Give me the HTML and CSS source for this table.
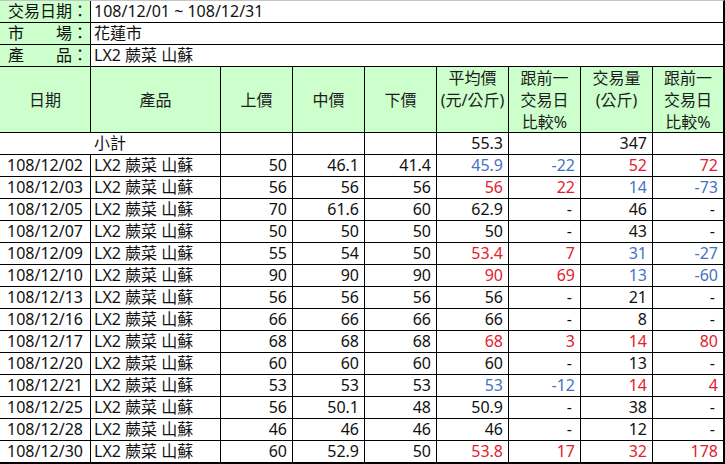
FILE: index.html
```html
<!DOCTYPE html>
<html lang="zh-Hant">
<head>
<meta charset="utf-8">
<title>交易行情</title>
<link rel="stylesheet" href="styles.css">
</head>
<body>
<div class="sheet">
  <div class="c lab">交易日期：</div>
  <div class="c val span8">108/12/01 ~ 108/12/31</div>
  <div class="c lab">市　　場：</div>
  <div class="c val span8">花蓮市</div>
  <div class="c lab">產　　品：</div>
  <div class="c val span8">LX2 蕨菜 山蘇</div>

  <div class="c hd">日期</div>
  <div class="c hd">產品</div>
  <div class="c hd">上價</div>
  <div class="c hd">中價</div>
  <div class="c hd">下價</div>
  <div class="c hd top">平均價<br>(元/公斤)</div>
  <div class="c hd top">跟前一<br>交易日<br>比較%</div>
  <div class="c hd top">交易量<br>(公斤)</div>
  <div class="c hd top">跟前一<br>交易日<br>比較%</div>

  <div class="c sub span2">小計</div>
  <div class="c"></div>
  <div class="c"></div>
  <div class="c"></div>
  <div class="c num">55.3</div>
  <div class="c"></div>
  <div class="c num">347</div>
  <div class="c"></div>

  <div class="c date">108/12/02</div><div class="c prod">LX2 蕨菜 山蘇</div><div class="c num">50</div><div class="c num">46.1</div><div class="c num">41.4</div><div class="c num blue">45.9</div><div class="c num blue">-22</div><div class="c num red">52</div><div class="c num red">72</div>
  <div class="c date">108/12/03</div><div class="c prod">LX2 蕨菜 山蘇</div><div class="c num">56</div><div class="c num">56</div><div class="c num">56</div><div class="c num red">56</div><div class="c num red">22</div><div class="c num blue">14</div><div class="c num blue">-73</div>
  <div class="c date">108/12/05</div><div class="c prod">LX2 蕨菜 山蘇</div><div class="c num">70</div><div class="c num">61.6</div><div class="c num">60</div><div class="c num">62.9</div><div class="c num dash">-</div><div class="c num">46</div><div class="c num dash">-</div>
  <div class="c date">108/12/07</div><div class="c prod">LX2 蕨菜 山蘇</div><div class="c num">50</div><div class="c num">50</div><div class="c num">50</div><div class="c num">50</div><div class="c num dash">-</div><div class="c num">43</div><div class="c num dash">-</div>
  <div class="c date">108/12/09</div><div class="c prod">LX2 蕨菜 山蘇</div><div class="c num">55</div><div class="c num">54</div><div class="c num">50</div><div class="c num red">53.4</div><div class="c num red">7</div><div class="c num blue">31</div><div class="c num blue">-27</div>
  <div class="c date">108/12/10</div><div class="c prod">LX2 蕨菜 山蘇</div><div class="c num">90</div><div class="c num">90</div><div class="c num">90</div><div class="c num red">90</div><div class="c num red">69</div><div class="c num blue">13</div><div class="c num blue">-60</div>
  <div class="c date">108/12/13</div><div class="c prod">LX2 蕨菜 山蘇</div><div class="c num">56</div><div class="c num">56</div><div class="c num">56</div><div class="c num">56</div><div class="c num dash">-</div><div class="c num">21</div><div class="c num dash">-</div>
  <div class="c date">108/12/16</div><div class="c prod">LX2 蕨菜 山蘇</div><div class="c num">66</div><div class="c num">66</div><div class="c num">66</div><div class="c num">66</div><div class="c num dash">-</div><div class="c num">8</div><div class="c num dash">-</div>
  <div class="c date">108/12/17</div><div class="c prod">LX2 蕨菜 山蘇</div><div class="c num">68</div><div class="c num">68</div><div class="c num">68</div><div class="c num red">68</div><div class="c num red">3</div><div class="c num red">14</div><div class="c num red">80</div>
  <div class="c date">108/12/20</div><div class="c prod">LX2 蕨菜 山蘇</div><div class="c num">60</div><div class="c num">60</div><div class="c num">60</div><div class="c num">60</div><div class="c num dash">-</div><div class="c num">13</div><div class="c num dash">-</div>
  <div class="c date">108/12/21</div><div class="c prod">LX2 蕨菜 山蘇</div><div class="c num">53</div><div class="c num">53</div><div class="c num">53</div><div class="c num blue">53</div><div class="c num blue">-12</div><div class="c num red">14</div><div class="c num red">4</div>
  <div class="c date">108/12/25</div><div class="c prod">LX2 蕨菜 山蘇</div><div class="c num">56</div><div class="c num">50.1</div><div class="c num">48</div><div class="c num">50.9</div><div class="c num dash">-</div><div class="c num">38</div><div class="c num dash">-</div>
  <div class="c date">108/12/28</div><div class="c prod">LX2 蕨菜 山蘇</div><div class="c num">46</div><div class="c num">46</div><div class="c num">46</div><div class="c num">46</div><div class="c num dash">-</div><div class="c num">12</div><div class="c num dash">-</div>
  <div class="c date">108/12/30</div><div class="c prod">LX2 蕨菜 山蘇</div><div class="c num">60</div><div class="c num">52.9</div><div class="c num">50</div><div class="c num red">53.8</div><div class="c num red">17</div><div class="c num red">32</div><div class="c num red">178</div>
</div>
</body>
</html>
```
FILE: styles.css
```css
html, body {
  margin: 0;
  padding: 0;
  background: #fff;
}

.sheet {
  box-sizing: border-box;
  width: 725px;
  height: 464px;
  display: grid;
  grid-template-columns: 90px 129px repeat(6, 71px) 70px;
  grid-template-rows: 21px 21px 21px 65px repeat(15, 21px);
  gap: 1px;
  background: #000;
  border-top: 1px solid #c4c4c4;
  border-right: 2px solid #000;
  border-bottom: 2px solid #000;
  font-family: "Noto Sans", "Noto Sans CJK TC", sans-serif;
  font-size: 16px;
  color: #111;
}

.c {
  background: #fff;
  display: flex;
  align-items: center;
  white-space: nowrap;
  overflow: hidden;
  line-height: 21px;
}

.lab {
  background: #ccffcc;
  padding-left: 8px;
}

.val {
  padding-left: 3px;
}

.span8 {
  grid-column: span 8;
}

.span2 {
  grid-column: span 2;
}

.hd {
  background: #ccffcc;
  justify-content: center;
  text-align: center;
  line-height: 22px;
  color: #1c1c1c;
}

.hd.top {
  align-items: flex-start;
  padding-top: 0;
}

.sub {
  justify-content: center;
}

.date {
  justify-content: center;
}

.prod {
  padding-left: 3px;
}

.num {
  justify-content: flex-end;
  padding-right: 5px;
}

.num.dash {
  padding-right: 8px;
}

.blue {
  color: #4472c4;
}

.red {
  color: #e3202e;
}
```
